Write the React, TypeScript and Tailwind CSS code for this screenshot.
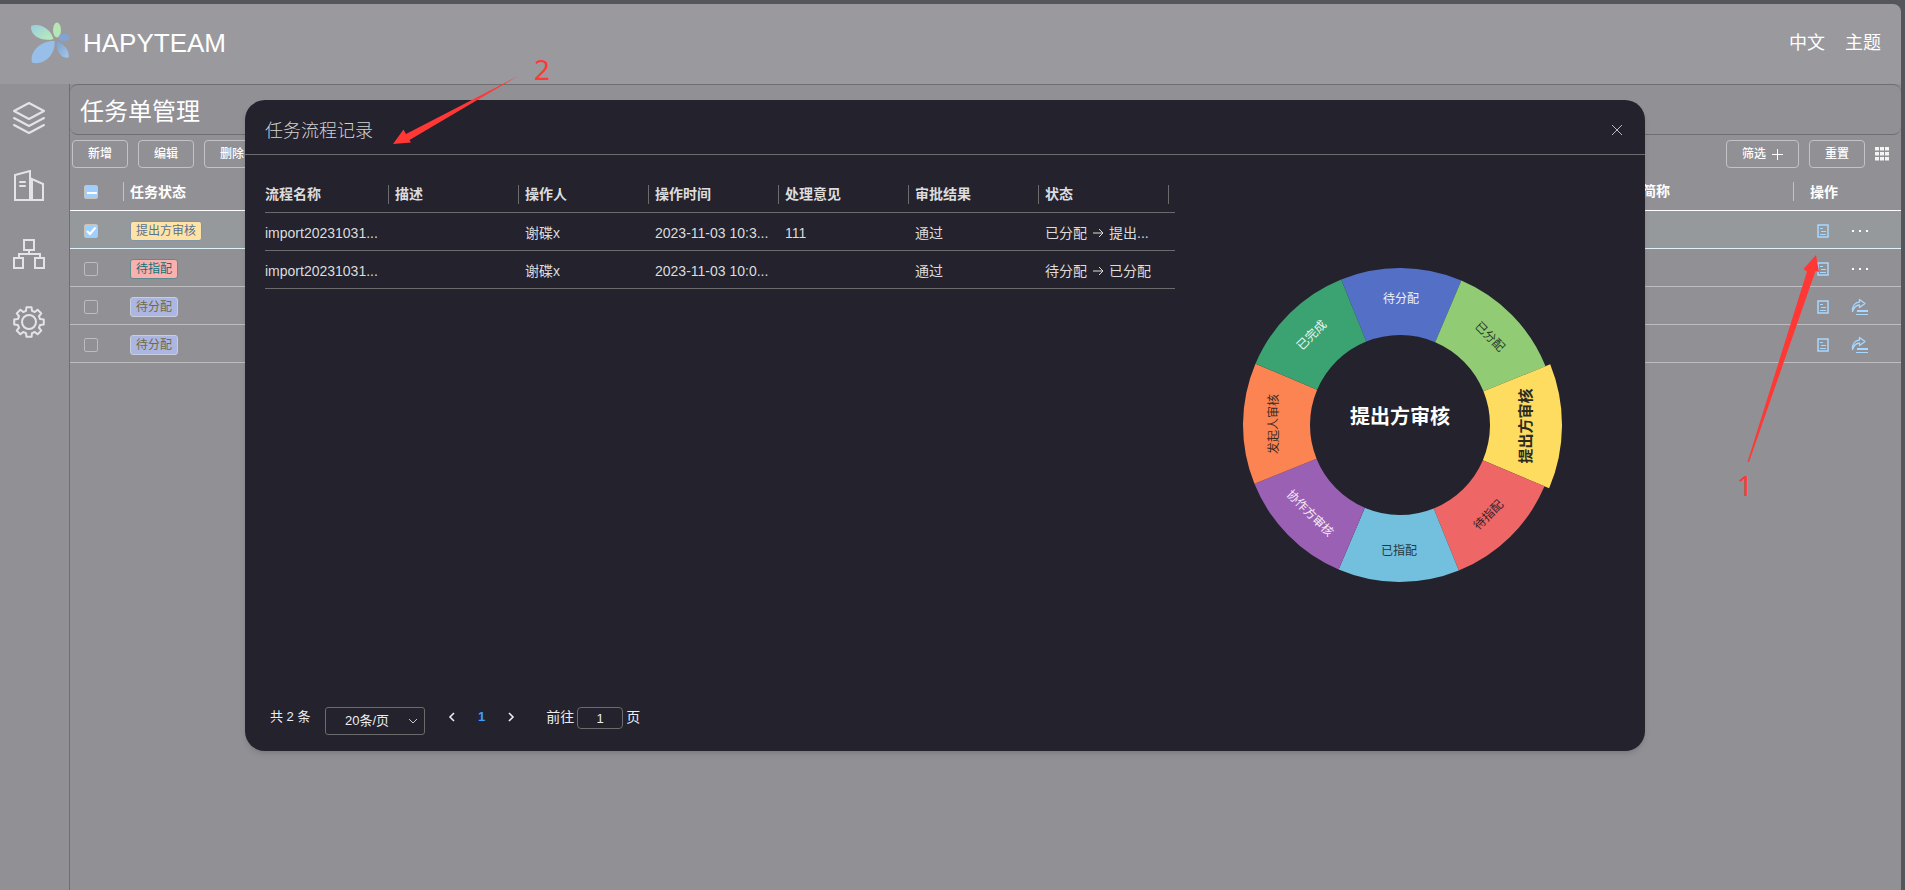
import React, { ReactNode } from 'react';

interface TaskRow {
    status: string;
    tone: 'yellow' | 'red' | 'blue';
    checked: boolean;
    canShare: boolean;
}

interface RecordRow {
    name: string;
    description: string;
    operator: string;
    time: string;
    opinion: string;
    result: string;
    from: string;
    to: string;
}

interface Slice {
    label: string;
    fill: string;
    text: string;
    rotate: number;
    active?: boolean;
}

const TASKS: TaskRow[] = [
    { status: '提出方审核', tone: 'yellow', checked: true, canShare: false },
    { status: '待指配', tone: 'red', checked: false, canShare: false },
    { status: '待分配', tone: 'blue', checked: false, canShare: true },
    { status: '待分配', tone: 'blue', checked: false, canShare: true },
];

const TAG_TONES = {
    yellow: 'border-[#8494a6] bg-[#ffe3a6] text-[#5a7193]',
    red: 'border-[#5f8a8e] bg-[#f9b1af] text-[#11707a]',
    blue: 'border-[#c9cddc] bg-[#abb6e2] text-[#75693c]',
};

const RECORD_COLUMNS = ['流程名称', '描述', '操作人', '操作时间', '处理意见', '审批结果', '状态'];

const RECORDS: RecordRow[] = [
    {
        name: 'import20231031...',
        description: '',
        operator: '谢碟x',
        time: '2023-11-03 10:3...',
        opinion: '111',
        result: '通过',
        from: '已分配',
        to: '提出...',
    },
    {
        name: 'import20231031...',
        description: '',
        operator: '谢碟x',
        time: '2023-11-03 10:0...',
        opinion: '',
        result: '通过',
        from: '待分配',
        to: '已分配',
    },
];

const SLICES: Slice[] = [
    { label: '待分配', fill: '#5470c6', text: '#eef1fa', rotate: 0 },
    { label: '已分配', fill: '#91cc75', text: '#2b3a26', rotate: 45 },
    { label: '提出方审核', fill: '#fddc60', text: '#2c2a20', rotate: -90, active: true },
    { label: '待指配', fill: '#ee6666', text: '#3a2226', rotate: -45 },
    { label: '已指配', fill: '#73c0de', text: '#26383f', rotate: 0 },
    { label: '协作方审核', fill: '#9a60b4', text: '#f3ecf6', rotate: 45 },
    { label: '发起人审核', fill: '#fc8452', text: '#3d2a22', rotate: -90 },
    { label: '已完成', fill: '#3ba272', text: '#eaf6f0', rotate: -45 },
];

const INNER = 90;
const OUTER = 157;
const ACTIVE_OUTER = 162;

// angle is measured clockwise from twelve o'clock
function polar(radius: number, angle: number) {
    const rad = (angle * Math.PI) / 180;
    return [radius * Math.sin(rad), -radius * Math.cos(rad)];
}

function slicePath(index: number, outer: number) {
    const start = index * 45 - 22;
    const end = start + 45;
    const [x1, y1] = polar(outer, start);
    const [x2, y2] = polar(outer, end);
    const [x3, y3] = polar(INNER, end);
    const [x4, y4] = polar(INNER, start);
    return `M${x1} ${y1}A${outer} ${outer} 0 0 1 ${x2} ${y2}L${x3} ${y3}A${INNER} ${INNER} 0 0 0 ${x4} ${y4}Z`;
}

function Logo() {
    return (
        <svg width="40" height="42" viewBox="0 0 40 42" aria-hidden="true">
            <defs>
                <linearGradient id="leaf" x1="0" y1="0" x2="1" y2="1">
                    <stop offset="0" stopColor="#9ccbe0" />
                    <stop offset="1" stopColor="#b9eeb6" />
                </linearGradient>
                <linearGradient id="petal" x1="0" y1="0" x2="1" y2="1">
                    <stop offset="0" stopColor="#7d9fce" />
                    <stop offset="1" stopColor="#a3c6ea" />
                </linearGradient>
            </defs>
            <path d="M1 4C8 1 20 5 23.500 17C14 20 0 15 1 4Z" fill="url(#leaf)" />
            <ellipse cx="27" cy="8" rx="4" ry="7.500" fill="#b5e6b4" />
            <ellipse cx="34" cy="15.500" rx="5.500" ry="3.800" fill="#83a4d2" />
            <path d="M26.500 19.500C33 21 40 28 38.500 35.500C31 37 26 29 26.500 19.500Z" fill="url(#petal)" />
            <path d="M24.500 19C12 18 -1 29 2 40.500C13 44 26 33 24.500 19Z" fill="#98bfea" />
        </svg>
    );
}

function SideIcon({ label, children }: { label: string; children: ReactNode }) {
    return (
        <a href="#" aria-label={label} className="block h-8 w-8 text-[#e4e4e6]">
            <svg
                width="32"
                height="32"
                viewBox="0 0 32 32"
                fill="none"
                stroke="currentColor"
                strokeWidth="2"
                strokeLinejoin="round"
                strokeLinecap="round"
            >
                {children}
            </svg>
        </a>
    );
}

function gearPath() {
    const points: string[] = [];
    for (let i = 0; i < 8; i++) {
        const a = i * 45;
        [
            [11.5, a - 15],
            [15, a - 10],
            [15, a + 10],
            [11.5, a + 15],
        ].forEach(([r, angle]) => {
            const [x, y] = polar(r, angle);
            points.push(`${(16 + x).toFixed(2)} ${(16 + y).toFixed(2)}`);
        });
    }
    return `M${points.join('L')}Z`;
}

function Sidebar() {
    return (
        <nav className="flex w-[70px] shrink-0 flex-col gap-9 border-r border-[#6f6e70] pt-[18px] pl-[13px]">
            <SideIcon label="任务">
                <path d="M16 1L31 9L16 17L1 9Z" />
                <path d="M1 16L16 24L31 16" />
                <path d="M1 23L16 31L31 23" />
            </SideIcon>
            <SideIcon label="企业">
                <path d="M2 30V5L17 1V30Z" strokeLinejoin="miter" />
                <path d="M19 30H30V14L19 9Z" strokeLinejoin="miter" />
                <path d="M7 12H12M7 16H12" />
            </SideIcon>
            <SideIcon label="组织">
                <path d="M11 2H21V12H11Z" strokeLinejoin="miter" />
                <path d="M1 20H10V30H1ZM22 20H31V30H22Z" strokeLinejoin="miter" />
                <path d="M16 12V16M6 20V16H27V20" strokeLinejoin="miter" />
            </SideIcon>
            <SideIcon label="设置">
                <path d={gearPath()} />
                <circle cx="16" cy="16" r="7" />
            </SideIcon>
        </nav>
    );
}

function ToolButton({ children }: { children: ReactNode }) {
    return (
        <button
            type="button"
            className="flex h-7 items-center gap-[6px] rounded-sm border border-[#c3c3c5] px-[15px] text-xs font-medium text-white"
        >
            {children}
        </button>
    );
}

function CheckBox({ label, checked, partial }: { label: string; checked: boolean; partial?: boolean }) {
    return (
        <label className="relative block h-[14px] w-[14px]">
            <input
                type="checkbox"
                aria-label={label}
                defaultChecked={checked}
                className="block h-[14px] w-[14px] appearance-none rounded-[2px] border border-[#bcbcbf] checked:border-[#c9c3b8] checked:bg-[#9fcfff]"
            />
            {checked && (
                <svg
                    className="pointer-events-none absolute inset-0"
                    width="14"
                    height="14"
                    viewBox="0 0 14 14"
                    fill="none"
                    stroke="#fff"
                    strokeWidth="2"
                >
                    {partial ? <path d="M3 8H13" /> : <path d="M3 7L6 10L11.500 3.500" />}
                </svg>
            )}
        </label>
    );
}

function DocIcon() {
    return (
        <svg width="12" height="14" viewBox="0 0 12 14" fill="none" stroke="#a9d8ff" aria-hidden="true">
            <path d="M1 1H11V13H1Z" strokeWidth="1.500" />
            <path d="M3 4.500H6M4 7.500H9M3 10.500H9" />
        </svg>
    );
}

function ShareIcon() {
    return (
        <svg width="18" height="18" viewBox="0 0 18 18" fill="none" stroke="#a9d8ff" aria-hidden="true">
            <path
                d="M1.500 13.500C1 8 4 4.500 8.500 4V1.500L14 5.500L8.500 9.500V7C5.500 7 3 9 1.500 13.500Z"
                strokeWidth="1.300"
                strokeLinejoin="round"
            />
            <path d="M6 13H17" strokeWidth="2" />
            <path d="M5 16.500H17" />
        </svg>
    );
}

function MoreIcon() {
    return (
        <svg width="18" height="4" viewBox="0 0 18 4" fill="#fff" aria-hidden="true">
            <path d="M1 1h2v2h-2zM8 1h2v2h-2zM15 1h2v2h-2z" />
        </svg>
    );
}

function TaskTable() {
    return (
        <table className="w-full table-fixed border-collapse text-left text-sm text-white">
            <colgroup>
                <col className="w-[60px]" />
                <col className="w-[130px]" />
                <col />
                <col className="w-[158px]" />
                <col className="w-[101px]" />
            </colgroup>
            <thead>
                <tr className="h-[38px] border-b border-white">
                    <th className="p-0 pt-[2px]">
                        <div className="mr-[6px] flex h-[19px] items-center justify-between border-r border-[#c3c3c5] pl-[14px]">
                            <CheckBox label="全选" checked partial />
                        </div>
                    </th>
                    <th className="p-0 pt-[2px] font-bold">任务状态</th>
                    <th className="p-0" />
                    <th className="p-0 pt-[2px] font-bold">
                        <div className="mr-[6px] border-r border-[#c3c3c5] leading-[19px]">简称</div>
                    </th>
                    <th className="p-0 pt-[2px] pl-[10px] font-bold">操作</th>
                </tr>
            </thead>
            <tbody>
                {TASKS.map((task, index) => (
                    <tr
                        key={index}
                        className={
                            task.checked
                                ? 'h-[38px] border-b border-[#dff3fb] bg-[#96999c]'
                                : 'h-[38px] border-b border-[#bdbdbf]'
                        }
                    >
                        <td className="p-0 pt-[3px] pl-[14px]">
                            <CheckBox label={task.status} checked={task.checked} />
                        </td>
                        <td className="p-0 pt-[3px]">
                            <span
                                className={`inline-block rounded-[3px] border px-[5px] align-middle text-xs leading-[18px] ${TAG_TONES[task.tone]}`}
                            >
                                {task.status}
                            </span>
                        </td>
                        <td className="p-0" />
                        <td className="p-0" />
                        <td className="p-0 pt-[3px] pl-[17px]">
                            <div className="flex items-center gap-[22px]">
                                <button type="button" aria-label="流程记录">
                                    <DocIcon />
                                </button>
                                <button type="button" aria-label={task.canShare ? '分配' : '更多'}>
                                    {task.canShare ? <ShareIcon /> : <MoreIcon />}
                                </button>
                            </div>
                        </td>
                    </tr>
                ))}
            </tbody>
        </table>
    );
}

function StatusChart() {
    return (
        <svg width="340" height="340" viewBox="-170 -170 340 340" role="img" aria-label="任务状态">
            {SLICES.map((slice, index) => (
                <path
                    key={slice.label}
                    d={slicePath(index, slice.active ? ACTIVE_OUTER : OUTER)}
                    fill={slice.fill}
                />
            ))}
            {SLICES.map((slice, index) => {
                const [x, y] = polar(126, index * 45 + 0.5);
                return (
                    <text
                        key={slice.label}
                        transform={`translate(${x} ${y}) rotate(${slice.rotate})`}
                        textAnchor="middle"
                        dominantBaseline="central"
                        fill={slice.text}
                        fontSize={slice.active ? 15 : 12}
                        fontWeight={slice.active ? 700 : 400}
                    >
                        {slice.label}
                    </text>
                );
            })}
            <text y="-8" textAnchor="middle" dominantBaseline="central" fill="#fff" fontSize="20" fontWeight="700">
                提出方审核
            </text>
        </svg>
    );
}

function RecordTable() {
    return (
        <table className="w-[910px] table-fixed border-collapse text-left text-sm text-[#dcdcdd]">
            <thead>
                <tr className="h-[38px] border-b border-[#6b6a6c]">
                    {RECORD_COLUMNS.map((column) => (
                        <th key={column} className="p-0 pt-[3px] font-bold">
                            <div className="mr-[6px] border-r border-[#6b6a6c] leading-[19px]">{column}</div>
                        </th>
                    ))}
                </tr>
            </thead>
            <tbody>
                {RECORDS.map((record, index) => (
                    <tr key={index} className="h-[38px] border-b border-[#6b6a6c] whitespace-nowrap">
                        <td className="p-0 pt-[3px]">{record.name}</td>
                        <td className="p-0 pt-[3px]">{record.description}</td>
                        <td className="p-0 pt-[3px]">{record.operator}</td>
                        <td className="p-0 pt-[3px]">{record.time}</td>
                        <td className="p-0 pt-[3px]">{record.opinion}</td>
                        <td className="p-0 pt-[3px]">{record.result}</td>
                        <td className="p-0 pt-[3px]">
                            <span className="flex items-center gap-[5px]">
                                {record.from}
                                <svg width="12" height="12" viewBox="0 0 12 12" fill="none" stroke="currentColor">
                                    <path d="M1 6H11M7 2L11 6L7 10" />
                                </svg>
                                {record.to}
                            </span>
                        </td>
                    </tr>
                ))}
            </tbody>
        </table>
    );
}

function Pagination() {
    return (
        <div className="flex items-start pl-[5px] text-sm leading-5 text-[#eeeeef]">
            <span className="w-[55px] text-[13px]">共 2 条</span>
            <div className="relative">
                <select
                    aria-label="每页条数"
                    className="block h-7 w-[100px] appearance-none rounded-[3px] border border-[#6b6a6c] pl-[19px] text-[13px]"
                >
                    <option>20条/页</option>
                </select>
                <svg
                    className="pointer-events-none absolute top-[9px] right-[7px]"
                    width="10"
                    height="10"
                    viewBox="0 0 10 10"
                    fill="none"
                    stroke="#c8c8ca"
                >
                    <path d="M1 3L5 7L9 3" />
                </svg>
            </div>
            <button type="button" aria-label="上一页" className="ml-[22px] flex h-5 w-[10px] items-center">
                <svg width="10" height="12" viewBox="0 0 10 12" fill="none" stroke="currentColor" strokeWidth="1.600">
                    <path d="M7 2L3 6L7 10" />
                </svg>
            </button>
            <button type="button" className="ml-[21px] text-[13px] font-bold text-[#409eff]">
                1
            </button>
            <button type="button" aria-label="下一页" className="ml-[21px] flex h-5 w-[10px] items-center">
                <svg width="10" height="12" viewBox="0 0 10 12" fill="none" stroke="currentColor" strokeWidth="1.600">
                    <path d="M3 2L7 6L3 10" />
                </svg>
            </button>
            <label className="ml-[30px] flex items-start gap-[3px]">
                前往
                <input
                    type="text"
                    defaultValue="1"
                    className="h-[22px] w-[46px] rounded-[4px] border border-[#6b6a6c] text-center text-[13px]"
                />
                <span>页</span>
            </label>
        </div>
    );
}

function RecordDialog() {
    return (
        <div
            role="dialog"
            aria-label="任务流程记录"
            className="flex min-h-[651px] w-full max-w-[1400px] flex-col rounded-[20px] bg-[#23222d] shadow-md"
        >
            <div className="flex h-[55px] items-center justify-between border-b border-[#6b6a6c] px-5 pt-2">
                <h2 className="text-lg font-light text-[#d2d2d3]">任务流程记录</h2>
                <button type="button" aria-label="关闭" className="pr-[2px] pb-[2px]">
                    <svg width="12" height="12" viewBox="0 0 12 12" fill="none" stroke="#b9b9bd">
                        <path d="M1 1L11 11M11 1L1 11" />
                    </svg>
                </button>
            </div>
            <div className="flex flex-1 pt-[19px] pl-5">
                <div className="flex flex-col justify-between pb-4">
                    <RecordTable />
                    <Pagination />
                </div>
                <div className="flex flex-1 justify-center pt-[81px] pr-5">
                    <StatusChart />
                </div>
            </div>
        </div>
    );
}

// red step markers, drawn above everything else
function StepMarkers() {
    return (
        <div className="pointer-events-none absolute inset-0 font-['Noto_Sans'] text-[28px] leading-7 text-[#ff3836]">
            <svg className="absolute top-[74px] left-[390px]" width="132" height="74" fill="#ff3836">
                <path d="M128 2L16 60L13.500 55.500L3 70L21 68.500L19.500 66Z" />
            </svg>
            <span className="absolute top-[55px] left-[534px]">2</span>
            <svg className="absolute top-[253px] right-[84px]" width="76" height="212" fill="#ff3836">
                <path d="M2.500 209L62 18.500L58.500 16L71 2L74 19L70.500 18L4 209Z" />
            </svg>
            <span className="absolute top-[471px] right-[152px]">1</span>
        </div>
    );
}

export default function App() {
    return (
        <div className="relative flex min-h-screen flex-col bg-[#55565b] pt-1 pr-1 font-['Liberation_Sans','Noto_Sans_CJK_SC',sans-serif]">
            <header className="flex h-[80px] items-center justify-between rounded-tr-lg bg-[#9a999e] pr-5 pb-[2px] pl-[30px] text-white">
                <a href="#" className="flex items-center gap-[13px]">
                    <Logo />
                    <span className="text-[26px]">HAPYTEAM</span>
                </a>
                <nav className="flex gap-5 text-lg">
                    <a href="#">中文</a>
                    <a href="#">主题</a>
                </nav>
            </header>
            <div className="flex flex-1 bg-[#919095]">
                <Sidebar />
                <main className="min-w-0 flex-1">
                    <div className="flex h-[51px] items-center rounded-lg border-y border-[#6f6e70] pt-1 pl-[10px]">
                        <h1 className="text-2xl text-white">任务单管理</h1>
                    </div>
                    <div className="flex justify-between pt-[5px] pr-3 pl-[2px]">
                        <div className="flex gap-[10px]">
                            <ToolButton>新增</ToolButton>
                            <ToolButton>编辑</ToolButton>
                            <ToolButton>删除</ToolButton>
                        </div>
                        <div className="flex items-center gap-[10px]">
                            <ToolButton>
                                筛选
                                <svg width="11" height="11" viewBox="0 0 11 11" stroke="#fff">
                                    <path d="M0 5.500H11M5.500 0V11" />
                                </svg>
                            </ToolButton>
                            <ToolButton>重置</ToolButton>
                            <button type="button" aria-label="列设置">
                                <svg width="14" height="14" viewBox="0 0 14 14" fill="#f4f4f5">
                                    <path d="M0 0h4v3.500h-4zM5 0h4v3.500h-4zM10 0h4v3.500h-4zM0 5h4v3.500h-4zM5 5h4v3.500h-4zM10 5h4v3.500h-4zM0 10h4v3.500h-4zM5 10h4v3.500h-4zM10 10h4v3.500h-4z" />
                                </svg>
                            </button>
                        </div>
                    </div>
                    <div className="pt-1">
                        <TaskTable />
                    </div>
                </main>
            </div>
            <div className="absolute inset-0 flex items-start justify-center pt-[100px] pr-[15px]">
                <RecordDialog />
            </div>
            <StepMarkers />
        </div>
    );
}
